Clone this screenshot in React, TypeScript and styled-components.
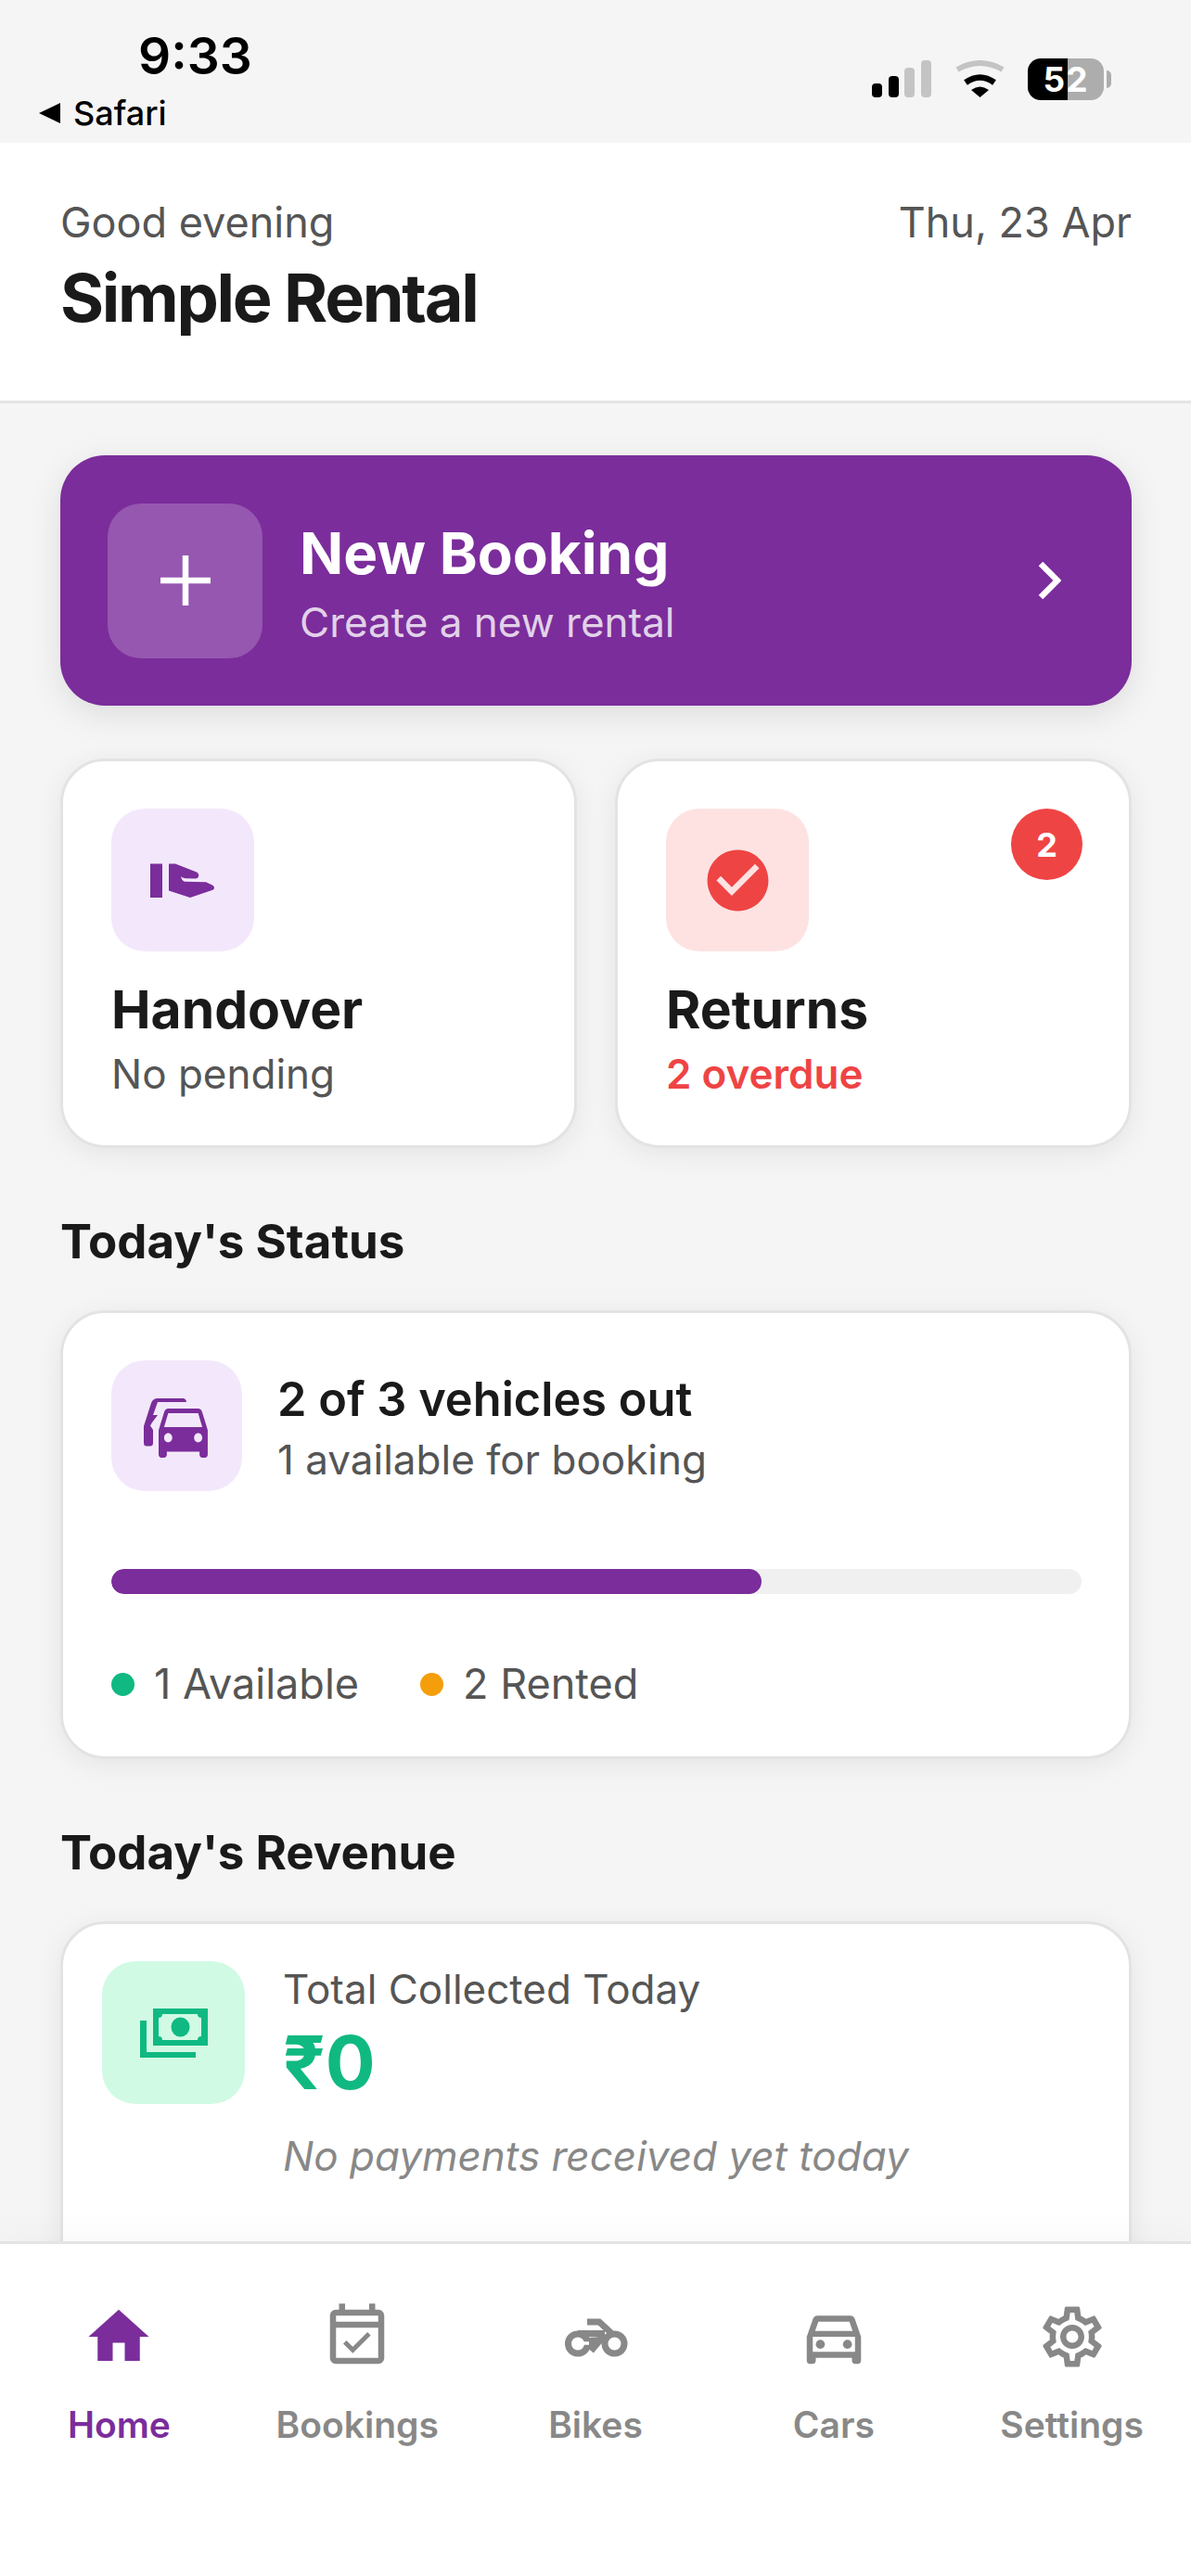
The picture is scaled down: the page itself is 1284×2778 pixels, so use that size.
import React from 'react';
import styled, { createGlobalStyle } from 'styled-components';
import {
  MdHome,
  MdOutlineEventAvailable,
  MdOutlineSettings,
  MdOutlineDirectionsCar,
  MdCheckCircle,
} from 'react-icons/md';

const PURPLE = '#7b2d9b';
const INK = '#1a1a1a';
const MUTED = '#555555';
const RED = '#ef4444';
const GREEN = '#10b981';

const Global = createGlobalStyle`
  html, body { margin: 0; padding: 0; background: #f5f5f5; }
  * { box-sizing: border-box; }
  body { font-family: Inter, "Liberation Sans", sans-serif; }
`;

const Page = styled.div`
  width: 1284px;
  height: 2778px;
  display: flex;
  flex-direction: column;
  overflow: hidden;
  background: #f5f5f5;
`;

const StatusBar = styled.div`
  height: 154px;
  flex: none;
  display: flex;
  justify-content: space-between;
  background: #f5f5f5;
  padding: 27px 86px 0 42px;
`;
const StatusLeft = styled.div`
  display: flex;
  flex-direction: column;
`;
const Clock = styled.div`
  margin-left: 107px;
  font-size: 55px;
  line-height: 66px;
  font-weight: 600;
  color: #000;
`;
const BackLink = styled.div`
  display: flex;
  align-items: center;
  gap: 14px;
  margin-top: 7px;
  font-size: 36px;
  line-height: 44px;
  font-weight: 500;
  color: #000;
`;
const BackArrow = styled.span`
  width: 0;
  height: 0;
  border-top: 11px solid transparent;
  border-bottom: 11px solid transparent;
  border-right: 23px solid #000;
`;
const StatusRight = styled.div`
  display: flex;
  align-items: center;
  height: 46px;
  margin-top: 35px;
`;
const Battery = styled.div`
  width: 82px;
  height: 45px;
  margin-left: 24px;
  border-radius: 14px;
  display: flex;
  align-items: center;
  justify-content: center;
  background: linear-gradient(90deg, #000 52.5%, #adadad 52.5%);
  color: #fff;
  font-size: 37px;
  font-weight: 700;
  letter-spacing: 1px;
`;
const BatteryTip = styled.span`
  width: 5px;
  height: 19px;
  margin-left: 3px;
  border-radius: 0 10px 10px 0;
  background: #adadad;
`;
const Signal = styled.svg`
  width: 64px;
  height: 40px;
  display: block;
`;
const Wifi = styled.svg`
  width: 55px;
  height: 40px;
  margin-left: 25px;
  display: block;
`;

const Header = styled.header`
  height: 281px;
  flex: none;
  display: flex;
  justify-content: space-between;
  align-items: flex-start;
  padding: 61px 64px 0 65px;
  background: #fff;
  border-bottom: 3px solid #e4e4e4;
`;
const Greeting = styled.div`
  font-size: 45px;
  line-height: 50px;
  color: ${MUTED};
`;
const AppName = styled.h1`
  margin: 13px 0 0;
  font-size: 72px;
  line-height: 86px;
  font-weight: 700;
  letter-spacing: -2.3px;
  color: ${INK};
`;
const DateText = styled.div`
  font-size: 45px;
  line-height: 50px;
  color: ${MUTED};
`;

const Main = styled.main`
  flex: 1;
  min-height: 0;
  overflow: hidden;
  padding: 56px 64px 0 65px;
`;

const Hero = styled.div`
  height: 270px;
  display: flex;
  align-items: center;
  gap: 40px;
  padding: 0 76px 0 51px;
  border-radius: 48px;
  background: ${PURPLE};
  box-shadow: 0 9px 36px rgba(0, 0, 0, 0.1);
`;
const HeroIcon = styled.div`
  width: 167px;
  height: 167px;
  flex: none;
  display: flex;
  align-items: center;
  justify-content: center;
  border-radius: 36px;
  background: rgba(255, 255, 255, 0.2);
`;
const HeroText = styled.div`
  flex: 1;
  padding-top: 5px;
`;
const HeroTitle = styled.div`
  font-size: 62px;
  line-height: 72px;
  font-weight: 700;
  color: #fff;
`;
const HeroSub = styled.div`
  margin-top: 13px;
  font-size: 44px;
  line-height: 50px;
  color: rgba(255, 255, 255, 0.8);
`;

const ActionGrid = styled.div`
  display: grid;
  grid-template-columns: 1fr 1fr;
  gap: 41px;
  margin-top: 57px;
`;

const Card = styled.div`
  background: #fff;
  border: 3px solid #e3e3e3;
  border-radius: 48px;
  box-shadow: 0 6px 30px rgba(0, 0, 0, 0.07);
`;
const ActionCard = styled(Card)`
  position: relative;
  height: 420px;
  padding: 51px 51px 0 52px;
`;
const IconTile = styled.div<{ $bg: string; $size: number }>`
  width: ${(p) => p.$size}px;
  height: ${(p) => p.$size}px;
  flex: none;
  display: flex;
  align-items: center;
  justify-content: center;
  border-radius: 36px;
  background: ${(p) => p.$bg};
`;
const ActionTitle = styled.div`
  margin-top: 30px;
  font-size: 57px;
  line-height: 66px;
  font-weight: 700;
  color: ${INK};
`;
const ActionSub = styled.div<{ $alert?: boolean }>`
  margin-top: 11px;
  font-size: 44px;
  line-height: 50px;
  font-weight: ${(p) => (p.$alert ? 600 : 400)};
  color: ${(p) => (p.$alert ? RED : MUTED)};
`;
const Badge = styled.div`
  position: absolute;
  top: 51px;
  right: 50px;
  width: 77px;
  height: 77px;
  border-radius: 50%;
  display: flex;
  align-items: center;
  justify-content: center;
  background: ${RED};
  color: #fff;
  font-size: 36px;
  font-weight: 700;
`;

const SectionTitle = styled.h2`
  margin: 71px 0 44px;
  font-size: 51px;
  line-height: 60px;
  font-weight: 700;
  color: ${INK};
`;

const StatusCard = styled(Card)`
  height: 484px;
  padding: 51px 51px 0 52px;
`;
const StatusRow = styled.div`
  display: flex;
  align-items: center;
  gap: 38px;
`;
const StatusText = styled.div`
  padding-top: 2px;
`;
const StatusTitle = styled.div`
  font-size: 50.5px;
  line-height: 60px;
  font-weight: 600;
  color: ${INK};
`;
const StatusSub = styled.div`
  margin-top: 10px;
  font-size: 44px;
  line-height: 50px;
  color: ${MUTED};
`;
const Track = styled.div`
  height: 27px;
  margin-top: 84px;
  border-radius: 14px;
  background: #f0f0f0;
  overflow: hidden;
`;
const Fill = styled.div`
  height: 100%;
  border-radius: 14px;
  background: ${PURPLE};
`;
const Legend = styled.div`
  display: flex;
  gap: 66px;
  margin-top: 72px;
`;
const LegendItem = styled.div`
  display: flex;
  align-items: center;
  gap: 21px;
  font-size: 45px;
  line-height: 50px;
  color: ${MUTED};
`;
const Dot = styled.span<{ $color: string }>`
  width: 25px;
  height: 25px;
  border-radius: 50%;
  background: ${(p) => p.$color};
`;

const RevenueCard = styled(Card)`
  height: 600px;
  padding: 40px 48px 0 42px;
`;
const RevenueRow = styled.div`
  display: flex;
  align-items: flex-start;
  gap: 41px;
`;
const RevenueBody = styled.div`
  padding-top: 5px;
`;
const RevenueLabel = styled.div`
  font-size: 44px;
  line-height: 50px;
  color: ${MUTED};
`;
const RevenueValue = styled.div`
  margin-top: 11px;
  font-size: 80px;
  line-height: 86px;
  font-weight: 700;
  color: ${GREEN};
`;
const RevenueNote = styled.div`
  margin-top: 33px;
  font-size: 44px;
  line-height: 50px;
  font-style: italic;
  color: #888888;
`;

const Nav = styled.nav`
  position: relative;
  height: 361px;
  flex: none;
  display: grid;
  grid-template-columns: repeat(5, 1fr);
  padding-top: 61px;
  background: #fff;
  border-top: 3px solid #e4e4e4;
  box-shadow: 0 -12px 30px rgba(0, 0, 0, 0.025);
`;
const NavItem = styled.div<{ $active?: boolean }>`
  display: flex;
  flex-direction: column;
  align-items: center;
  color: ${(p) => (p.$active ? PURPLE : '#888888')};
`;
const NavIcon = styled.div`
  height: 78px;
  display: flex;
  align-items: center;
  justify-content: center;
`;
const NavLabel = styled.div`
  margin-top: 34px;
  font-size: 39px;
  line-height: 44px;
  font-weight: 600;
`;

const HandIcon = () => (
  <svg width="110" height="80" viewBox="140 910 110 80" fill={PURPLE}>
    <rect x="160" y="932.5" width="13" height="36.5" />
    <path d="M180 932.5H187L210 941.500Q213 943.500 212 946.500Q211 948.800 208 948.500L198 948.300Q194.500 948 193 946.300Q194 951 197 951.800L220 952.300L227 955.500Q230.500 958 228 960.500L203 969L180 961.500Z" />
  </svg>
);

const CarsIcon = () => (
  <svg width="100" height="80" viewBox="0 0 100 80" fill={PURPLE}>
    <path d="M14 40L22 15Q24 10 29 10H57Q60 11 60 14H29L24 28H29L23 36L21 39.500L24 44V58Q24 61.500 21 61.500H17Q14 61.500 14 58Z" />
    <g transform="translate(21.200 4.500) scale(2.940 3.310)">
      <path d="M18.920 6.010C18.720 5.420 18.160 5 17.500 5h-11c-.66 0-1.210.42-1.420 1.010L3 12v8c0 .55.45 1 1 1h1c.55 0 1-.45 1-1v-1h12v1c0 .55.45 1 1 1h1c.55 0 1-.45 1-1v-8l-2.080-5.990zM6.500 16c-.83 0-1.500-.67-1.500-1.500S5.670 13 6.500 13s1.500.67 1.500 1.500S7.330 16 6.500 16zm11 0c-.83 0-1.500-.67-1.500-1.500s.67-1.500 1.500-1.500 1.500.67 1.500 1.500-.67 1.500-1.500 1.500zM5 11l1.500-4.500h11L19 11H5z" />
    </g>
  </svg>
);

const CashIcon = () => (
  <svg width="73" height="53" viewBox="0 0 73 53" fill={GREEN}>
    <path
      fillRule="evenodd"
      d="M14 0H73V40H14ZM24 6A4 4 0 0 1 20 10V30A4 4 0 0 1 24 34H62A4 4 0 0 1 66 30V10A4 4 0 0 1 62 6Z"
    />
    <ellipse cx="43.500" cy="20" rx="10" ry="10.500" />
    <path d="M0 13H7V47H60V53H0Z" />
  </svg>
);

const BikeIcon = () => (
  <svg width="110" height="80" viewBox="-3 0 110 80" fill="none" stroke="#888888">
    <circle cx="72.500" cy="47.500" r="10.500" strokeWidth="7" />
    <circle cx="33" cy="47.500" r="10.500" strokeWidth="7" />
    <path d="M33 36.500H62" strokeWidth="7" />
    <path d="M43 24H56L69 36" strokeWidth="7" />
    <path d="M47 55L62 37" strokeWidth="7.500" />
    <path d="M43 41L58 40L46 55Z" fill="#888888" stroke="none" />
    <path d="M33 47H45" stroke="#fff" strokeWidth="3.500" />
  </svg>
);

export default function App() {
  return (
    <Page>
      <Global />
      <StatusBar>
        <StatusLeft>
          <Clock>9:33</Clock>
          <BackLink>
            <BackArrow />
            Safari
          </BackLink>
        </StatusLeft>
        <StatusRight>
          <Signal viewBox="0 0 64 40">
            <rect x="0" y="25" width="11" height="15" rx="4" fill="#000" />
            <rect x="18" y="17" width="11" height="23" rx="4" fill="#000" />
            <rect x="35" y="8" width="11" height="32" rx="4" fill="#c4c4c4" />
            <rect x="53" y="0" width="11" height="40" rx="4" fill="#c4c4c4" />
          </Signal>
          <Wifi viewBox="0 0 55 40" fill="none">
            <path d="M3 10Q27.500 -4 52 10" stroke="#c4c4c4" strokeWidth="6" />
            <path d="M12 24Q27.500 13 43 24" stroke="#000" strokeWidth="6.500" />
            <path d="M18 32Q27.500 25 37 32L27.500 40Z" fill="#000" />
          </Wifi>
          <Battery>52</Battery>
          <BatteryTip />
        </StatusRight>
      </StatusBar>

      <Header>
        <div>
          <Greeting>Good evening</Greeting>
          <AppName>Simple Rental</AppName>
        </div>
        <DateText>Thu, 23 Apr</DateText>
      </Header>

      <Main>
        <Hero>
          <HeroIcon>
            <svg width="54" height="54" viewBox="0 0 54 54" stroke="#fff" strokeWidth="6.500">
              <path d="M27 0V54M0 27H54" />
            </svg>
          </HeroIcon>
          <HeroText>
            <HeroTitle>New Booking</HeroTitle>
            <HeroSub>Create a new rental</HeroSub>
          </HeroText>
          <svg width="25" height="40" viewBox="0 0 25 40" fill="none" stroke="#fff" strokeWidth="6.500">
            <path d="M3 2L21 20L3 38" />
          </svg>
        </Hero>

        <ActionGrid>
          <ActionCard>
            <IconTile $bg="#f3e8fb" $size={154}>
              <HandIcon />
            </IconTile>
            <ActionTitle>Handover</ActionTitle>
            <ActionSub>No pending</ActionSub>
          </ActionCard>
          <ActionCard>
            <IconTile $bg="#fee2e2" $size={154}>
              <MdCheckCircle size={79} color={RED} />
            </IconTile>
            <Badge>2</Badge>
            <ActionTitle>Returns</ActionTitle>
            <ActionSub $alert>2 overdue</ActionSub>
          </ActionCard>
        </ActionGrid>

        <SectionTitle>Today's Status</SectionTitle>
        <StatusCard>
          <StatusRow>
            <IconTile $bg="#f3e8fb" $size={141}>
              <CarsIcon />
            </IconTile>
            <StatusText>
              <StatusTitle>2 of 3 vehicles out</StatusTitle>
              <StatusSub>1 available for booking</StatusSub>
            </StatusText>
          </StatusRow>
          <Track>
            <Fill style={{ width: '67%' }} />
          </Track>
          <Legend>
            <LegendItem>
              <Dot $color={GREEN} />1 Available
            </LegendItem>
            <LegendItem>
              <Dot $color="#f59e0b" />2 Rented
            </LegendItem>
          </Legend>
        </StatusCard>

        <SectionTitle>Today's Revenue</SectionTitle>
        <RevenueCard>
          <RevenueRow>
            <IconTile $bg="#d1fae5" $size={154}>
              <CashIcon />
            </IconTile>
            <RevenueBody>
              <RevenueLabel>Total Collected Today</RevenueLabel>
              <RevenueValue>₹0</RevenueValue>
              <RevenueNote>No payments received yet today</RevenueNote>
            </RevenueBody>
          </RevenueRow>
        </RevenueCard>
      </Main>

      <Nav>
        <NavItem $active>
          <NavIcon>
            <MdHome size={78} />
          </NavIcon>
          <NavLabel>Home</NavLabel>
        </NavItem>
        <NavItem>
          <NavIcon>
            <MdOutlineEventAvailable size={78} />
          </NavIcon>
          <NavLabel>Bookings</NavLabel>
        </NavItem>
        <NavItem>
          <NavIcon>
            <BikeIcon />
          </NavIcon>
          <NavLabel>Bikes</NavLabel>
        </NavItem>
        <NavItem>
          <NavIcon>
            <MdOutlineDirectionsCar size={78} />
          </NavIcon>
          <NavLabel>Cars</NavLabel>
        </NavItem>
        <NavItem>
          <NavIcon>
            <MdOutlineSettings size={78} />
          </NavIcon>
          <NavLabel>Settings</NavLabel>
        </NavItem>
      </Nav>
    </Page>
  );
}
